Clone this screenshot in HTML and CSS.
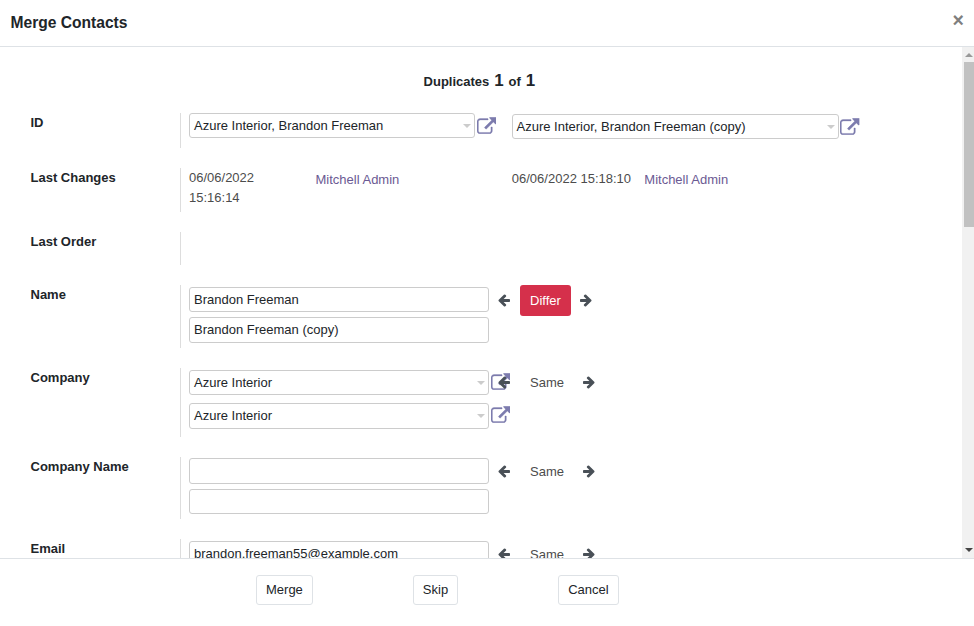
FILE: index.html
```html
<!DOCTYPE html>
<html lang="en">
<head>
<meta charset="utf-8">
<title>Merge Contacts</title>
<link rel="stylesheet" href="styles.css">
</head>
<body>
<svg class="sprite" aria-hidden="true">
  <symbol id="left" viewBox="0 0 1792 1792"><path d="M1664 896v128q0 53-32.5 90.5t-84.5 37.5h-704l293 294q38 36 38 90t-38 90l-75 76q-37 37-90 37-52 0-91-37l-651-652q-37-37-37-90 0-52 37-91l651-650q38-38 91-38 52 0 90 38l75 74q38 38 38 91t-38 91l-293 293h704q52 0 84.500 37.500t32.500 90.500z"/></symbol>
  <symbol id="right" viewBox="0 0 1792 1792"><path d="M1600 960q0 54-37 91l-651 651q-39 37-91 37-51 0-90-37l-75-75q-38-38-38-91t38-91l293-293h-704q-52 0-84.500-37.500t-32.500-90.500v-128q0-53 32.500-90.500t84.500-37.500h704l-293-294q-38-36-38-90t38-90l75-75q38-38 90-38 53 0 91 38l651 651q37 35 37 90z"/></symbol>
  <symbol id="external" viewBox="0 0 1792 1536"><path d="M1408 928v320q0 119-84.500 203.500t-203.500 84.500h-832q-119 0-203.500-84.500t-84.500-203.500v-832q0-119 84.500-203.500t203.500-84.500h704q14 0 23 9t9 23v64q0 14-9 23t-23 9h-704q-66 0-113 47t-47 113v832q0 66 47 113t113 47h832q66 0 113-47t47-113v-320q0-14 9-23t23-9h64q14 0 23 9t9 23zm384-864v512q0 26-19 45t-45 19-45-19l-176-176-652 652q-10 10-23 10t-23-10l-114-114q-10-10-10-23t10-23l652-652-176-176q-19-19-19-45t19-45 45-19h512q26 0 45 19t19 45z"/></symbol>
</svg>
<div class="modal">
  <header class="head"><h1>Merge Contacts</h1><button class="close">×</button></header>
  <main class="body">
    <div class="content">
      <p class="counter">Duplicates <b>1</b> of <b>1</b></p>

      <section class="row id-row">
        <h2>ID</h2>
        <div class="cell">
          <div class="field select id-first">Azure Interior, Brandon Freeman</div>
          <svg class="ext"><use href="#external"/></svg>
          <div class="field select id-second">Azure Interior, Brandon Freeman (copy)</div>
          <svg class="ext ext-low"><use href="#external"/></svg>
        </div>
      </section>

      <section class="row changes-row">
        <h2>Last Changes</h2>
        <div class="cell">
          <span class="date date-first">06/06/2022 15:16:14</span>
          <a class="user user-first">Mitchell Admin</a>
          <span class="date date-second">06/06/2022 15:18:10</span>
          <a class="user">Mitchell Admin</a>
        </div>
      </section>

      <section class="row order-row">
        <h2>Last Order</h2>
        <div class="cell"></div>
      </section>

      <section class="row name-row">
        <h2>Name</h2>
        <div class="cell">
          <div class="stack">
            <div class="field">Brandon Freeman</div>
            <div class="field tall">Brandon Freeman (copy)</div>
          </div>
          <div class="compare"><svg class="arrow"><use href="#left"/></svg><span class="state differ">Differ</span><svg class="arrow next"><use href="#right"/></svg></div>
        </div>
      </section>

      <section class="row company-row">
        <h2>Company</h2>
        <div class="cell">
          <div class="stack">
            <div class="field select">Azure Interior<svg class="ext over"><use href="#external"/></svg></div>
            <div class="field select tall">Azure Interior<svg class="ext over"><use href="#external"/></svg></div>
          </div>
          <div class="compare"><svg class="arrow"><use href="#left"/></svg><span class="state">Same</span><svg class="arrow next"><use href="#right"/></svg></div>
        </div>
      </section>

      <section class="row company-name-row">
        <h2>Company Name</h2>
        <div class="cell">
          <div class="stack">
            <div class="field tall"></div>
            <div class="field"></div>
          </div>
          <div class="compare"><svg class="arrow"><use href="#left"/></svg><span class="state">Same</span><svg class="arrow next"><use href="#right"/></svg></div>
        </div>
      </section>

      <section class="row email-row">
        <h2>Email</h2>
        <div class="cell">
          <div class="stack">
            <div class="field">brandon.freeman55@example.com</div>
          </div>
          <div class="compare"><svg class="arrow"><use href="#left"/></svg><span class="state">Same</span><svg class="arrow next"><use href="#right"/></svg></div>
        </div>
      </section>
    </div>
    <div class="scrollbar">
      <svg class="tip" viewBox="0 0 8 4"><path d="M0 4 4 0 8 4z"/></svg>
      <div class="thumb"></div>
      <svg class="tip tip-down" viewBox="0 0 8 4"><path d="M0 0h8L4 4z"/></svg>
    </div>
  </main>
  <footer class="foot">
    <button class="btn merge">Merge</button>
    <button class="btn skip">Skip</button>
    <button class="btn">Cancel</button>
  </footer>
</div>
</body>
</html>
```
FILE: styles.css
```css
* { box-sizing: border-box; }
body {
  margin: 0;
  background: #fff;
  color: #4c4c4c;
  font: 13px/20px "Liberation Sans", Arial, sans-serif;
}
.sprite { display: none; }
h1, h2, p { margin: 0; }
.modal {
  display: flex;
  flex-direction: column;
  height: 626px;
  overflow: hidden;
}
.head {
  display: flex;
  justify-content: space-between;
  height: 47px;
  padding: 10px 10px 0 10.5px;
  border-bottom: 1px solid #dee2e6;
  color: #212529;
}
h1 { font-size: 15.6px; line-height: 25px; }
.close {
  height: 20px;
  padding: 0;
  border: 0;
  background: none;
  color: #7f7f7f;
  font: bold 19.5px/20px "Liberation Sans", Arial, sans-serif;
}
.body {
  display: flex;
  height: 511px;
  overflow: hidden;
}
.content { width: 962px; }
.counter {
  height: 66px;
  padding: 22px 2px 0 0;
  color: #212529;
  font-weight: bold;
  line-height: 24px;
  text-align: center;
}
.counter b { margin: 0 1.300px; font-size: 16.900px; }
.row {
  display: grid;
  grid-template-columns: 150px 1fr;
  margin: 0 0 20px 30.5px;
}
.row h2 {
  color: #212529;
  font-size: 13px;
  line-height: 20px;
}
.cell {
  display: flex;
  align-items: flex-start;
  margin-left: -0.5px;
  padding-left: 8px;
  border-left: 1px solid #ddd;
}
.id-row { height: 35px; }
.changes-row { height: 44px; }
.order-row { height: 33px; }
.name-row { height: 63px; }
.company-row { height: 69px; }
.company-name-row { height: 62px; }
.email-row { height: 63px; }
.field {
  position: relative;
  width: 300px;
  height: 25px;
  padding: 0 4px;
  border: 1px solid #ccc;
  border-radius: 3px;
  color: #212529;
  line-height: 23px;
}
.field.tall { height: 26px; }
.select::after {
  content: "";
  position: absolute;
  top: 10px;
  right: 3px;
  border: 4px solid transparent;
  border-top-color: #ccc;
  border-bottom: 0;
}
.id-first { width: 286px; }
.id-second { width: 327px; margin: 1px 0 0 15.500px; }
.ext {
  flex: none;
  width: 19.500px;
  height: 17px;
  margin: 3.500px 0 0 1.500px;
  fill: #7c7bad;
  stroke: #7c7bad;
  stroke-width: 30;
}
.ext-low { margin-top: 4.500px; }
.over {
  position: absolute;
  top: -1.500px;
  left: calc(100% + 1px);
}
.date-first { width: 126.500px; padding-right: 50px; }
.user { color: #6b5a93; margin-top: 2px; }
.user-first { width: 196.300px; }
.date-second { width: 132.500px; margin-top: 1px; }
.stack {
  display: grid;
  align-content: start;
  gap: 5px;
  padding-top: 2px;
}
.company-row .stack { gap: 8px; }
.company-name-row .stack { gap: 5px; padding-top: 1px; }
.compare {
  position: relative;
  display: flex;
  align-items: center;
  gap: 8px;
  height: 31px;
  margin-left: 9px;
}
.company-row .compare, .company-name-row .compare { margin-top: -1px; }
.arrow { width: 14px; height: 14px; margin: -1px 1px 0 -1px; fill: #495057; }
.arrow.next { margin-left: 0.500px; }
.state {
  height: 31px;
  padding: 0 10px;
  border-radius: 3px;
  line-height: 31px;
}
.differ { background: #d5304b; color: #fff; }
.scrollbar {
  display: flex;
  flex-direction: column;
  align-items: flex-end;
  width: 12px;
  padding: 6px 0;
  background: #f1f1f1;
}
.tip { width: 8px; height: 4px; margin-right: 1px; fill: #999; }
.tip-down { margin-top: auto; fill: #444; }
.thumb { width: 10px; height: 165px; margin-top: 5px; background: #c1c1c1; }
.foot {
  display: flex;
  height: 68px;
  padding: 16px 0 0 256px;
  border-top: 1px solid #dee2e6;
}
.btn {
  height: 30px;
  padding: 0 9px;
  border: 1px solid #dee2e6;
  border-radius: 3px;
  background: #fff;
  color: #212529;
  font: 13px/28px "Liberation Sans", Arial, sans-serif;
}
.merge { margin-right: 100px; }
.skip { margin-right: 100px; }
```
